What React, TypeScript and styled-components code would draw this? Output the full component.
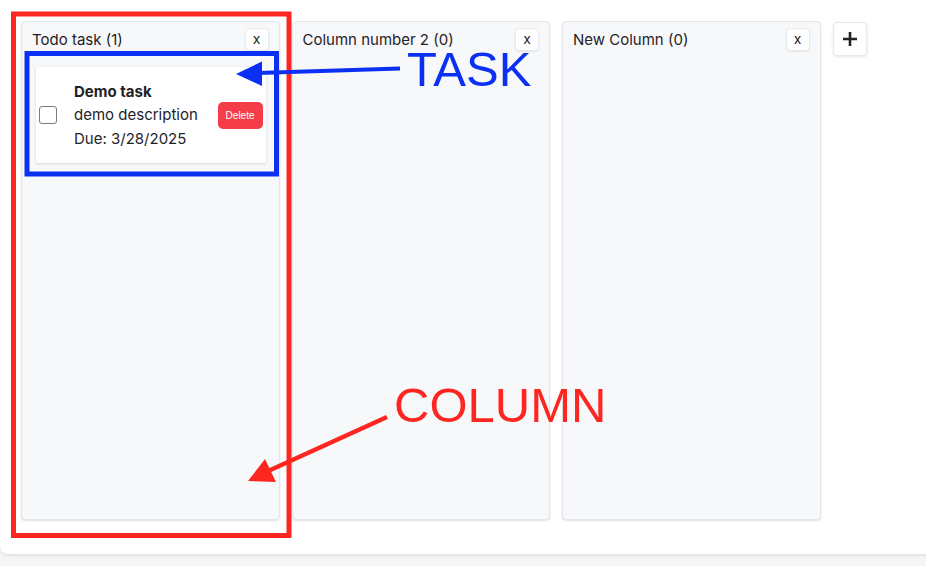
import React from "react";
import styled, { createGlobalStyle } from "styled-components";

const Global = createGlobalStyle`
  html, body { margin: 0; padding: 0; overflow: hidden; }
  body {
    background: #f4f5f7;
    font-family: Inter, "Noto Sans", sans-serif;
    color: #1f2328;
  }
`;

const Page = styled.div`
  position: relative;
  width: 926px;
  height: 566px;
`;

const Board = styled.div`
  width: 960px;
  height: 555px;
  box-sizing: border-box;
  background: #ffffff;
  border-radius: 0 0 8px 8px;
  border-bottom: 1px solid #e3e5e9;
  box-shadow: 0 1px 3px rgba(0, 0, 0, 0.08);
  padding: 21px 0 0 21px;
  display: flex;
  align-items: flex-start;
  gap: 12px;
`;

const Column = styled.section`
  width: 258.5px;
  height: 499px;
  box-sizing: border-box;
  background: #f7f8fa;
  border: 1px solid #e3e5e9;
  border-radius: 4px;
  box-shadow: 0 1px 2px rgba(0, 0, 0, 0.12);
  padding: 6px 10px;
  display: flex;
  flex-direction: column;
`;

const ColumnHeader = styled.header`
  display: flex;
  align-items: center;
  justify-content: space-between;
  height: 23px;
`;

const ColumnTitle = styled.h2`
  margin: -1px 0 0;
  font-size: 15px;
  font-weight: 400;
  color: #1f2328;
`;

const CloseButton = styled.button`
  width: 24px;
  height: 23px;
  padding: 0 0 2px;
  box-sizing: border-box;
  background: #ffffff;
  border: 1px solid #e7e9ec;
  border-radius: 4px;
  box-shadow: 0 1px 2px rgba(0, 0, 0, 0.08);
  font-family: Inter, sans-serif;
  font-size: 14px;
  color: #1f2328;
  display: flex;
  align-items: center;
  justify-content: center;
`;

const TaskList = styled.div`
  padding: 16px 3px 0 4px;
  display: flex;
  flex-direction: column;
  gap: 8px;
`;

const TaskCard = styled.article`
  height: 96px;
  box-sizing: border-box;
  background: #ffffff;
  border-radius: 3px;
  box-shadow: 0 1px 3px rgba(0, 0, 0, 0.14);
  padding: 0 3px;
  display: flex;
  align-items: center;
`;

const Check = styled.input`
  appearance: none;
  width: 18px;
  height: 18px;
  margin: 0;
  box-sizing: border-box;
  border: 1.5px solid #7a7a7a;
  border-radius: 3px;
  background: #fff;
  flex: none;
`;

const TaskBody = styled.div`
  margin-left: 17px;
  flex: 1;
  display: flex;
  flex-direction: column;
  font-size: 15px;
  line-height: 23.5px;
  color: #1f2328;
`;

const TaskTitle = styled.div`
  font-weight: 700;
`;

const DeleteButton = styled.button`
  height: 27px;
  padding: 0 8px;
  background: #f43d48;
  border: none;
  border-radius: 5px;
  color: #fff;
  font-family: "Liberation Sans", Arial, sans-serif;
  font-size: 10px;
  flex: none;
`;

const AddButton = styled.button`
  width: 34px;
  height: 34px;
  margin: 1px 0 0 0;
  background: #ffffff;
  border: 1px solid #e7e9ec;
  border-radius: 4px;
  box-shadow: 0 1px 3px rgba(0, 0, 0, 0.1);
  display: flex;
  align-items: center;
  justify-content: center;
  padding: 0;
`;

const Overlay = styled.svg`
  position: absolute;
  left: 0;
  top: 0;
  pointer-events: none;
`;

type Task = { title: string; description: string; due: string };
type Col = { title: string; tasks: Task[] };

const columns: Col[] = [
  {
    title: "Todo task",
    tasks: [{ title: "Demo task", description: "demo description", due: "3/28/2025" }],
  },
  { title: "Column number 2", tasks: [] },
  { title: "New Column", tasks: [] },
];

const RED = "#fe2620";
const BLUE = "#0c30f3";

export default function App() {
  return (
    <Page>
      <Global />
      <Board>
        {columns.map((c) => (
          <Column key={c.title}>
            <ColumnHeader>
              <ColumnTitle>
                {c.title} ({c.tasks.length})
              </ColumnTitle>
              <CloseButton>x</CloseButton>
            </ColumnHeader>
            <TaskList>
              {c.tasks.map((t) => (
                <TaskCard key={t.title}>
                  <Check type="checkbox" />
                  <TaskBody>
                    <TaskTitle>{t.title}</TaskTitle>
                    <div>{t.description}</div>
                    <div>Due: {t.due}</div>
                  </TaskBody>
                  <DeleteButton>Delete</DeleteButton>
                </TaskCard>
              ))}
            </TaskList>
          </Column>
        ))}
        <AddButton aria-label="Add column">
          <svg width="16" height="16" viewBox="0 0 16 16">
            <path d="M8 1v14M1 8h14" stroke="#1f2328" strokeWidth="2.6" fill="none" />
          </svg>
        </AddButton>
      </Board>
      <Overlay width="926" height="566" viewBox="0 0 926 566">
        <rect x="13.5" y="14" width="275.5" height="521.5" fill="none" stroke={RED} strokeWidth="5" />
        <rect x="27" y="53.5" width="249.5" height="120.5" fill="none" stroke={BLUE} strokeWidth="5" />
        <line x1="258" y1="73" x2="400" y2="68.5" stroke={BLUE} strokeWidth="4" />
        <polygon points="236,74 262,61.5 262,86" fill={BLUE} />
        <text x="407" y="86" fontFamily="Liberation Sans, Arial, sans-serif" fontSize="49" fill={BLUE}>
          TASK
        </text>
        <line x1="387" y1="417" x2="266" y2="472" stroke={RED} strokeWidth="4.5" />
        <polygon points="248,481 265,459 276,482" fill={RED} />
        <text x="394" y="422" fontFamily="Liberation Sans, Arial, sans-serif" fontSize="49" fill={RED}>
          COLUMN
        </text>
      </Overlay>
    </Page>
  );
}
